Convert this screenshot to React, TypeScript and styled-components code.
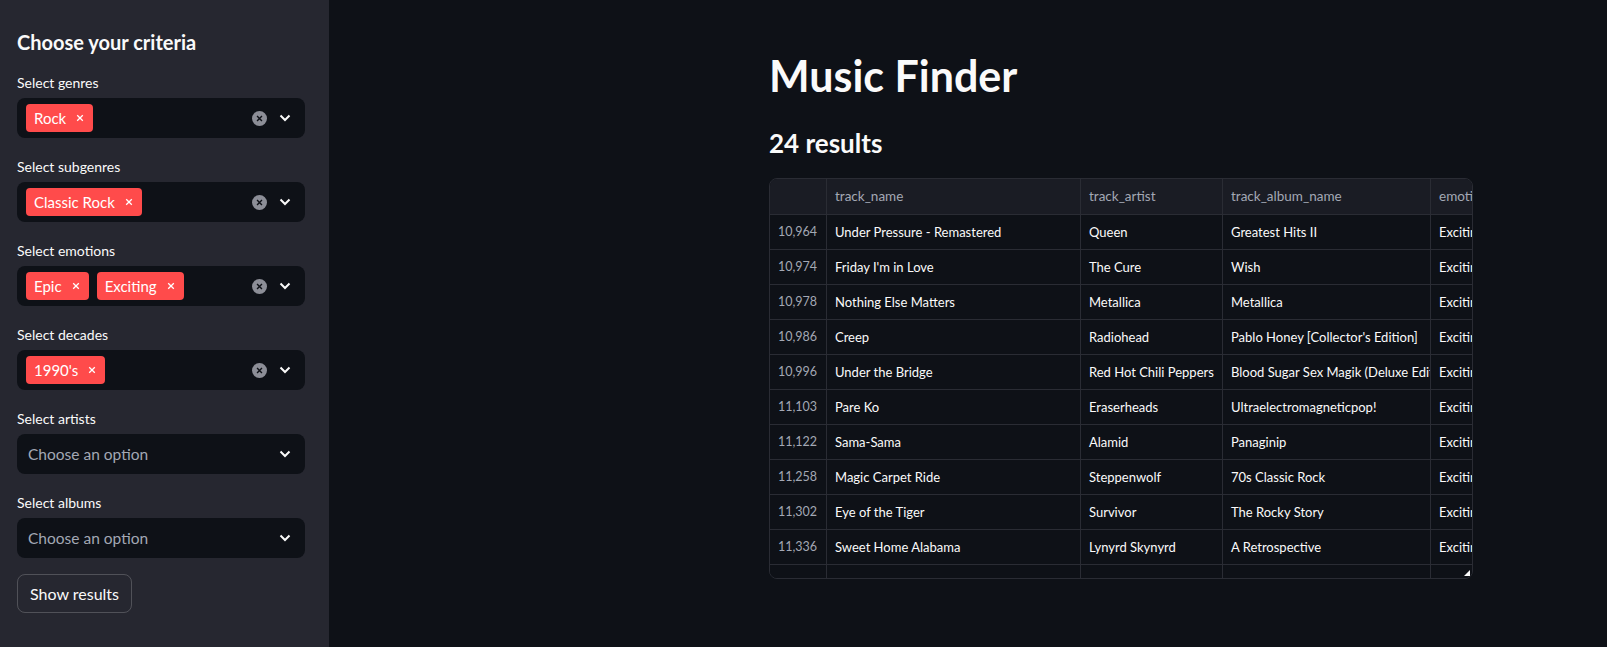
import React from 'react';
import styled, { createGlobalStyle } from 'styled-components';

const GlobalStyle = createGlobalStyle`
    html, body {
        margin: 0;
        padding: 0;
        background: #0e1117;
        font-family: Lato, "Liberation Sans", sans-serif;
        color: #fafafa;
    }
`;

const Layout = styled.div`
    display: flex;
    height: 647px;
    overflow: hidden;
`;

const Sidebar = styled.aside`
    width: 329px;
    flex-shrink: 0;
    box-sizing: border-box;
    background: #262730;
    padding: 28px 24px 0 17px;
    display: flex;
    flex-direction: column;
`;

const SideTitle = styled.h2`
    margin: 0 0 18px;
    font-size: 20px;
    line-height: 28px;
    font-weight: 700;
`;

const Field = styled.div`
    display: flex;
    flex-direction: column;
    gap: 6px;
    margin-bottom: 20px;
`;

const Label = styled.label`
    font-size: 14px;
    line-height: 18px;
`;

const SelectBox = styled.div`
    height: 40px;
    box-sizing: border-box;
    background: #0e1117;
    border-radius: 8px;
    display: flex;
    align-items: center;
    padding: 0 14px 0 9px;
    gap: 8px;
`;

const Tags = styled.div`
    flex: 1;
    display: flex;
    align-items: center;
    gap: 8px;
`;

const Tag = styled.span`
    height: 28px;
    display: inline-flex;
    align-items: center;
    gap: 10px;
    padding: 0 9px 0 8px;
    border-radius: 4px;
    background: #ff4b4b;
    color: #fff;
    font-size: 15px;
`;

const Placeholder = styled.span`
    flex: 1;
    padding-left: 2px;
    font-size: 15.5px;
    color: #a3a8b4;
`;

const ClearIcon = styled.span`
    width: 15px;
    height: 15px;
    border-radius: 50%;
    background: #8c8e97;
    display: inline-flex;
    align-items: center;
    justify-content: center;
    margin-right: 4px;
`;

const Button = styled.button`
    align-self: flex-start;
    margin-top: -4px;
    height: 39px;
    padding: 0 12px;
    background: transparent;
    color: #fafafa;
    border: 1px solid rgba(250, 250, 250, 0.2);
    border-radius: 8px;
    font-family: inherit;
    font-size: 16px;
`;

const Main = styled.main`
    flex: 1;
    padding: 50px 0 0 440px;
`;

const Content = styled.div`
    width: 704px;
`;

const Title = styled.h1`
    margin: 0 0 26px;
    font-size: 43px;
    line-height: 1.2;
    font-weight: 700;
`;

const Results = styled.h3`
    margin: 0 0 19px;
    font-size: 26px;
    line-height: 1.2;
    font-weight: 700;
`;

const Table = styled.div`
    position: relative;
    height: 399px;
    border: 1px solid #2a2c34;
    border-radius: 8px;
    overflow: hidden;
`;

const COLS = '57px 254px 142px 208px 200px';

const Row = styled.div<{ $head?: boolean }>`
    display: grid;
    grid-template-columns: ${COLS};
    height: ${p => (p.$head ? 35 : 34)}px;
    background: ${p => (p.$head ? '#1a1c24' : '#0e1117')};
    border-bottom: 1px solid #2a2c34;
`;

const Cell = styled.div<{ $index?: boolean; $head?: boolean }>`
    display: flex;
    align-items: center;
    justify-content: ${p => (p.$index ? 'flex-end' : 'flex-start')};
    padding: ${p => (p.$index ? '0 9px 0 0' : '0 8px')};
    font-size: ${p => (p.$index ? 12.5 : p.$head ? 13.5 : 13)}px;
    white-space: nowrap;
    overflow: hidden;
    color: ${p => (p.$index || p.$head ? '#a3a8b4' : '#fafafa')};
    border-right: 1px solid #2a2c34;
`;

const ResizeHandle = styled.span`
    position: absolute;
    right: 2px;
    bottom: 2px;
    width: 0;
    height: 0;
    border-left: 6px solid transparent;
    border-bottom: 6px solid #fafafa;
`;

const Chevron = () => (
    <svg width="12" height="8" viewBox="0 0 12 8">
        <path d="M1.5 1.5 6 6l4.5-4.5" fill="none" stroke="#fafafa" strokeWidth="2" />
    </svg>
);

const Cross = ({ size, color, weight = 1.6 }: { size: number; color: string; weight?: number }) => (
    <svg width={size} height={size} viewBox="0 0 10 10">
        <path d="M1.5 1.5l7 7M8.5 1.5l-7 7" stroke={color} strokeWidth={weight} />
    </svg>
);

type Filter = { label: string; values: string[] };

const filters: Filter[] = [
    { label: 'Select genres', values: ['Rock'] },
    { label: 'Select subgenres', values: ['Classic Rock'] },
    { label: 'Select emotions', values: ['Epic', 'Exciting'] },
    { label: 'Select decades', values: ["1990's"] },
    { label: 'Select artists', values: [] },
    { label: 'Select albums', values: [] },
];

const rows = [
    ['10,964', 'Under Pressure - Remastered', 'Queen', 'Greatest Hits II', 'Exciting'],
    ['10,974', "Friday I'm in Love", 'The Cure', 'Wish', 'Exciting'],
    ['10,978', 'Nothing Else Matters', 'Metallica', 'Metallica', 'Exciting'],
    ['10,986', 'Creep', 'Radiohead', "Pablo Honey [Collector's Edition]", 'Exciting'],
    ['10,996', 'Under the Bridge', 'Red Hot Chili Peppers', 'Blood Sugar Sex Magik (Deluxe Edition)', 'Exciting'],
    ['11,103', 'Pare Ko', 'Eraserheads', 'Ultraelectromagneticpop!', 'Exciting'],
    ['11,122', 'Sama-Sama', 'Alamid', 'Panaginip', 'Exciting'],
    ['11,258', 'Magic Carpet Ride', 'Steppenwolf', '70s Classic Rock', 'Exciting'],
    ['11,302', 'Eye of the Tiger', 'Survivor', 'The Rocky Story', 'Exciting'],
    ['11,336', 'Sweet Home Alabama', 'Lynyrd Skynyrd', 'A Retrospective', 'Exciting'],
    ['', '', '', '', ''],
];

const headers = ['', 'track_name', 'track_artist', 'track_album_name', 'emotion'];

const App = () => (
    <Layout>
        <GlobalStyle />
        <Sidebar>
            <SideTitle>Choose your criteria</SideTitle>
            {filters.map(f => (
                <Field key={f.label}>
                    <Label>{f.label}</Label>
                    <SelectBox>
                        {f.values.length > 0 ? (
                            <>
                                <Tags>
                                    {f.values.map(v => (
                                        <Tag key={v}>
                                            {v}
                                            <Cross size={8} color="#fff" />
                                        </Tag>
                                    ))}
                                </Tags>
                                <ClearIcon>
                                    <Cross size={7} color="#0e1117" weight={2} />
                                </ClearIcon>
                            </>
                        ) : (
                            <Placeholder>Choose an option</Placeholder>
                        )}
                        <Chevron />
                    </SelectBox>
                </Field>
            ))}
            <Button>Show results</Button>
        </Sidebar>
        <Main>
            <Content>
                <Title>Music Finder</Title>
                <Results>24 results</Results>
                <Table>
                    <Row $head>
                        {headers.map((h, i) => (
                            <Cell key={i} $head>{h}</Cell>
                        ))}
                    </Row>
                    {rows.map((r, ri) => (
                        <Row key={ri}>
                            {r.map((c, ci) => (
                                <Cell key={ci} $index={ci === 0}>{c}</Cell>
                            ))}
                        </Row>
                    ))}
                    <ResizeHandle />
                </Table>
            </Content>
        </Main>
    </Layout>
);

export default App;
